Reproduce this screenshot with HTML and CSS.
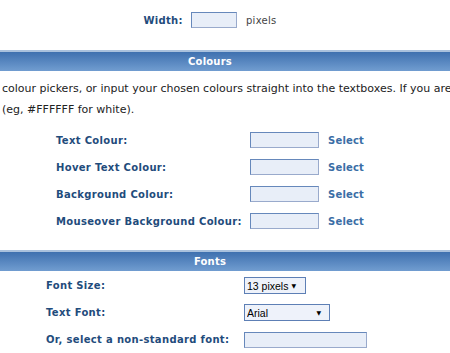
FILE: index.html
```html
<!DOCTYPE html>
<html lang="en">
<head>
    <meta charset="UTF-8">
    <title>Menu Settings</title>
    <link rel="stylesheet" href="styles.css">
</head>
<body>

<div class="width-row">
    <label for="menuWidth">Width:</label>
    <input type="text" id="menuWidth" class="box box-small">
    <span class="unit">pixels</span>
</div>

<div class="section-head">Colours</div>
<p class="intro">colour pickers, or input your chosen colours straight into the textboxes. If you are<br>(eg, #FFFFFF for white).</p>

<div class="colour-table">
    <label for="textColour">Text Colour:</label>
    <input type="text" id="textColour" class="box">
    <a href="#" class="pick">Select</a>

    <label for="hoverColour">Hover Text Colour:</label>
    <input type="text" id="hoverColour" class="box">
    <a href="#" class="pick">Select</a>

    <label for="bgColour">Background Colour:</label>
    <input type="text" id="bgColour" class="box">
    <a href="#" class="pick">Select</a>

    <label for="overColour">Mouseover Background Colour:</label>
    <input type="text" id="overColour" class="box">
    <a href="#" class="pick">Select</a>
</div>

<div class="section-head">Fonts</div>
<div class="font-table">
    <label for="fontSize">Font Size:</label>
    <span class="select-wrap">
        <select id="fontSize" class="pick-size">
            <option>13 pixels</option>
            <option>11 pixels</option>
            <option>12 pixels</option>
        </select>
    </span>

    <label for="fontFace">Text Font:</label>
    <span class="select-wrap">
        <select id="fontFace" class="pick-face">
            <option>Arial</option>
            <option>Verdana</option>
            <option>Tahoma</option>
        </select>
    </span>

    <label for="fontCustom">Or, select a non-standard font:</label>
    <input type="text" id="fontCustom" class="box box-wide">
</div>

</body>
</html>
```

FILE: styles.css
```css
body {
    margin: 0;
    font-family: "DejaVu Sans", Verdana, sans-serif;
    font-size: 10px;
    color: #333;
    background: #fff;
    overflow: hidden;
}
label {
    font-weight: bold;
    color: #1f4c7c;
    letter-spacing: 0.33px;
}
.box {
    box-sizing: border-box;
    width: 69px;
    height: 16px;
    margin: 0;
    padding: 0 3px;
    border: 1px solid #6688bb;
    border-right-color: #99aacc;
    border-bottom-color: #99aacc;
    background: #e8eef8;
}
.width-row {
    width: 420px;
    padding-top: 12px;
    display: flex;
    justify-content: center;
    align-items: center;
    gap: 8px;
}
.box-small {
    width: 46px;
}
.unit {
    font-size: 10px;
    letter-spacing: 0.3px;
    color: #444;
    margin-left: 1px;
}
.section-head {
    margin-top: 22px;
    height: 19px;
    line-height: 19px;
    border-top: 2px solid #a9c1dd;
    background: linear-gradient(#3e70af, #719dd0);
    color: #fff;
    font-weight: bold;
    font-size: 10px;
    letter-spacing: 0.2px;
    text-align: center;
    padding-right: 30px;
}
.intro {
    margin: 7px 0 0 2px;
    line-height: 21px;
    white-space: nowrap;
    font-size: 11px;
    color: #222;
}
.colour-table {
    margin: 12px 0 0 56px;
    display: grid;
    grid-template-columns: 194px 78px auto;
    grid-auto-rows: 16px;
    row-gap: 11px;
    align-items: center;
}
.pick {
    font-weight: bold;
    color: #3b6ea6;
    letter-spacing: 0.2px;
    text-decoration: none;
}
.colour-table + .section-head {
    margin-top: 21px;
}
.font-table {
    margin: 6px 0 0 46px;
    display: grid;
    grid-template-columns: 198px auto;
    grid-auto-rows: 17px;
    row-gap: 10px;
    align-items: center;
    justify-items: start;
}
.select-wrap {
    position: relative;
    display: inline-block;
    height: 17px;
}
.select-wrap::after {
    content: "\25BC";
    position: absolute;
    top: 5px;
    font-size: 6px;
    line-height: 7px;
    color: #000;
    pointer-events: none;
}
.select-wrap select {
    appearance: none;
    -webkit-appearance: none;
    box-sizing: border-box;
    height: 17px;
    margin: 0;
    padding: 0 2px;
    border: 1px solid #5d7fb5;
    background: #eef2fa;
    font-family: "Liberation Sans", Arial, sans-serif;
    font-size: 10.5px;
    color: #000;
    border-radius: 0;
}
.select-wrap:first-of-type::after {
    right: 10px;
}
.pick-size {
    width: 62px;
}
.pick-face {
    width: 86px;
}
.font-table .select-wrap:nth-of-type(2)::after {
    right: 9px;
}
.box-wide {
    width: 123px;
}
```
